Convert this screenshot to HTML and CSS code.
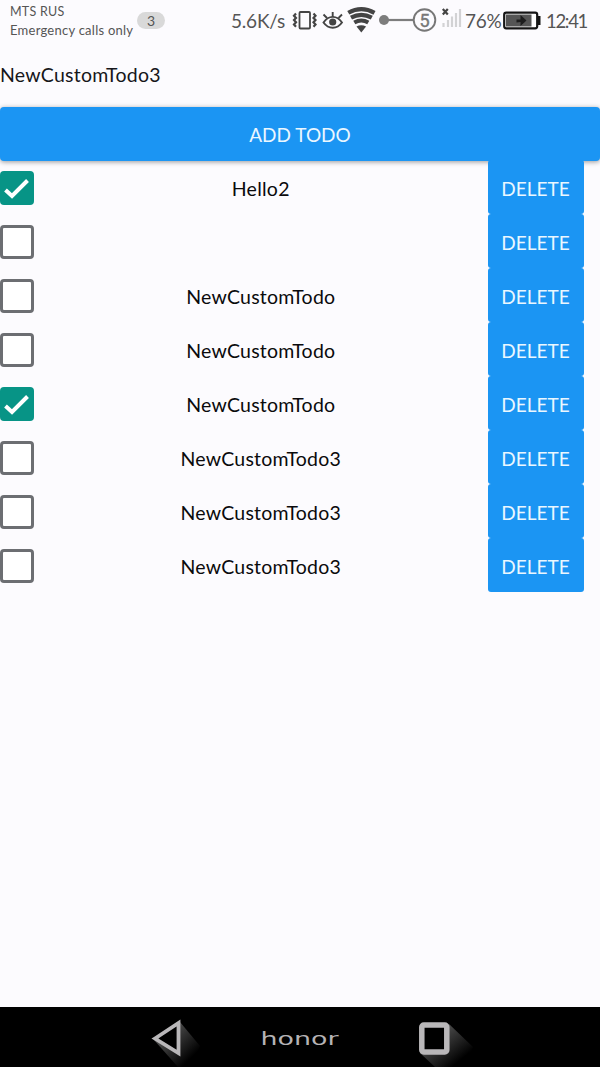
FILE: index.html
```html
<!DOCTYPE html>
<html lang="en">
<head>
<meta charset="utf-8">
<title>Todo</title>
<link rel="stylesheet" href="styles.css">
</head>
<body>
<div class="screen">
  <header class="status">
    <div class="carrier">
      <div class="carrier-name">MTS RUS</div>
      <div class="carrier-note">Emergency calls only</div>
    </div>
    <span class="count">3</span>
    <span class="status-text speed">5.6K/s</span>
    <svg class="status-icons" width="172" height="40" viewBox="290 0 172 40" fill="none">
      <rect x="299.500" y="12" width="10.500" height="16.500" rx="1" stroke="#444" stroke-width="1.800"/>
      <path d="M296 13.500l-2 2.200 2 2.200-2 2.200 2 2.200-2 2.200 2 2.200M313.500 13.500l2 2.200-2 2.200 2 2.200-2 2.200 2 2.200-2 2.200" stroke="#444" stroke-width="2.200"/>
      <path d="M323.500 22.500c5-7.500 13.500-7.500 18.500 0-5 7-13.500 7-18.500 0z" stroke="#444" stroke-width="1.900"/>
      <path d="M323.500 14.500l3.500 3.500M332.700 12v5M342 14.500l-3.500 3.500" stroke="#444" stroke-width="1.900"/>
      <circle cx="332.700" cy="22" r="3.600" fill="#444"/>
      <path d="M348.300 12.800q13-7.500 26.200 0M351 17.700q10.300-5.700 20.800 0M354.300 22.500q7-4 14 0" stroke="#444" stroke-width="4.200"/>
      <path d="M356.500 26.500q4.800-2.700 9.600 0l-4.800 6z" fill="#444"/>
      <circle cx="384" cy="20" r="5" fill="#7d7d7d"/>
      <path d="M388 20h25" stroke="#7d7d7d" stroke-width="2.200"/>
      <circle cx="424.500" cy="20" r="10.800" stroke="#777" stroke-width="1.900"/>
      <text class="ring-number" x="424.500" y="26.500" text-anchor="middle">5</text>
      <path d="M442.800 9l5 5.500M447.800 9l-5 5.500" stroke="#444" stroke-width="2.200"/>
      <path d="M443.500 23v4M448 20v7M452 16.500v10.500M456 13v14M460 9v18" stroke="#d2d2d4" stroke-width="2.200"/>
    </svg>
    <span class="status-text percent">76%</span>
    <svg class="battery" width="38" height="40" viewBox="503 0 38 40">
      <rect x="504.200" y="12.700" width="33" height="15.600" rx="2" fill="#fff" stroke="#151515" stroke-width="2.200"/>
      <rect x="506" y="14.500" width="25.500" height="12" fill="#555"/>
      <path d="M538 16h2.500v9H538z" fill="#151515"/>
      <path d="M516.500 19.500h4V15l6 5.500-6 5.500v-4l-4 .5z" fill="#1d1d1d"/>
    </svg>
    <span class="status-text clock">12:41</span>
  </header>

  <main class="app">
    <div class="entry">NewCustomTodo3</div>
    <button class="add">ADD TODO</button>
    <ul class="todos">
      <li class="todo"><span class="box checked"><svg width="34" height="34" viewBox="0 0 34 34"><path d="M5.500 19l6.500 6L27.500 9.500" fill="none" stroke="#fff" stroke-width="4"/></svg></span><span class="title">Hello2</span><button class="delete">DELETE</button></li>
      <li class="todo"><span class="box"></span><span class="title"></span><button class="delete">DELETE</button></li>
      <li class="todo"><span class="box"></span><span class="title">NewCustomTodo</span><button class="delete">DELETE</button></li>
      <li class="todo"><span class="box"></span><span class="title">NewCustomTodo</span><button class="delete">DELETE</button></li>
      <li class="todo"><span class="box checked"><svg width="34" height="34" viewBox="0 0 34 34"><path d="M5.500 19l6.500 6L27.500 9.500" fill="none" stroke="#fff" stroke-width="4"/></svg></span><span class="title">NewCustomTodo</span><button class="delete">DELETE</button></li>
      <li class="todo"><span class="box"></span><span class="title">NewCustomTodo3</span><button class="delete">DELETE</button></li>
      <li class="todo"><span class="box"></span><span class="title">NewCustomTodo3</span><button class="delete">DELETE</button></li>
      <li class="todo"><span class="box"></span><span class="title">NewCustomTodo3</span><button class="delete">DELETE</button></li>
    </ul>
  </main>

  <nav class="navbar">
    <svg width="600" height="60" viewBox="0 1007 600 60">
      <defs>
        <linearGradient id="cast" x1="0" y1="0" x2="1" y2="1">
          <stop offset=".3" stop-color="#484848"/>
          <stop offset=".8" stop-color="#000"/>
        </linearGradient>
      </defs>
      <path d="M154 1040l26-18 20 24-8 21h-14z" fill="url(#cast)"/>
      <path d="M155 1038.500l23.500-15.500v30z" fill="#000" stroke="#b9b7b9" stroke-width="3.800"/>
      <text class="brand" x="260.500" y="1045" textLength="78" lengthAdjust="spacingAndGlyphs">honor</text>
      <path d="M420 1053l29-29 24 23-8 20h-30z" fill="url(#cast)"/>
      <rect x="421.800" y="1025" width="25" height="27" rx="2" fill="#000" stroke="#b9b7b9" stroke-width="5.500"/>
    </svg>
  </nav>
</div>
</body>
</html>
```
FILE: styles.css
```css
* {
  box-sizing: border-box;
}

body {
  margin: 0;
  font-family: Lato, "Open Sans", sans-serif;
  color: #16161a;
}

.screen {
  display: flex;
  flex-direction: column;
  width: 600px;
  height: 1067px;
  background: #fcfbfe;
  overflow: hidden;
}

.status {
  display: flex;
  align-items: flex-start;
  height: 40px;
  color: #555;
}

.carrier {
  width: 127px;
  margin-left: 10px;
  padding-top: 3px;
  font-size: 13px;
  line-height: 18px;
  white-space: nowrap;
}

.carrier-name {
  font-size: 12.500px;
  letter-spacing: 0.250px;
}

.carrier-note {
  letter-spacing: 0.250px;
}

.count {
  width: 28px;
  height: 17px;
  margin-top: 12px;
  border-radius: 9px;
  background: #d9d9d9;
  font-size: 14px;
  line-height: 17px;
  text-align: center;
}

.status-text {
  font-size: 19px;
  line-height: 42px;
  white-space: nowrap;
}

.speed {
  width: 59px;
  margin-left: 66px;
  letter-spacing: -0.200px;
}

.percent {
  width: 38px;
  margin-left: 3px;
  letter-spacing: -0.300px;
}

.status-icons,
.battery {
  flex: none;
}

.clock {
  margin-left: 5px;
  font-size: 18.500px;
  letter-spacing: -1.300px;
}

.ring-number {
  font-family: Roboto, sans-serif;
  font-size: 18px;
  fill: #777;
  stroke: #777;
  stroke-width: 0.400px;
}

.app {
  flex: 1;
}

.entry {
  height: 67px;
  font-size: 19.500px;
  letter-spacing: 0.240px;
  line-height: 70px;
}

button {
  border: 0;
  padding: 0;
  background: #1b95f3;
  color: #eaf7ff;
  font-family: inherit;
  font-size: 19px;
}

.add {
  display: block;
  width: 600px;
  height: 53.500px;
  margin-bottom: -0.500px;
  border-radius: 4px;
  box-shadow: 0 1px 5px rgba(0, 0, 0, 0.4);
  line-height: 56px;
}

.todos {
  margin: 0;
  padding: 0;
  list-style: none;
}

.todo {
  display: grid;
  grid-template-columns: 34px 453.500px 96px;
  height: 54px;
}

.box {
  width: 33.500px;
  height: 33.500px;
  margin-top: 11px;
  border: 3px solid #6c6e72;
  border-radius: 4px;
  background: #fff;
}

.box.checked {
  border: 0;
  background: #079486;
}

.box svg {
  display: block;
}

.title {
  color: #0a0a0c;
  font-size: 19.500px;
  letter-spacing: 0.240px;
  line-height: 57px;
  text-align: center;
}

.delete {
  height: 54px;
  border-radius: 3px;
  line-height: 58px;
}

.navbar {
  height: 60px;
  background: #000;
}

.navbar svg {
  display: block;
}

.brand {
  font-family: "DejaVu Sans", sans-serif;
  font-size: 18px;
  font-weight: 400;
  fill: #b5b3b5;
}
```
